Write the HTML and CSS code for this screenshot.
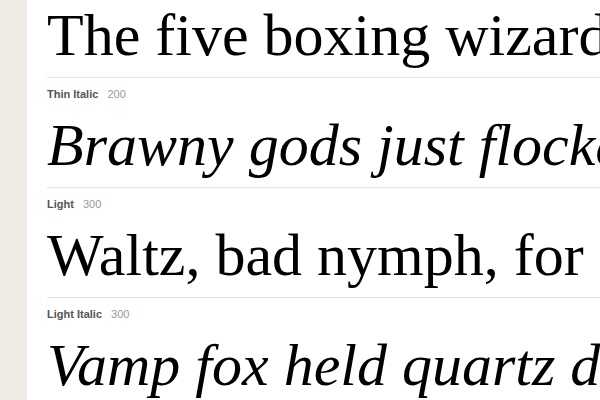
FILE: index.html
```
<!DOCTYPE HTML>
<html lang="en">
  <head>
    <title>Type specimen</title>
    <meta charset="utf-8">
    <link rel="stylesheet" href="styles.css">
  </head>
  <body>

  <div id="page">
    <div id="sidebar"></div>

    <div id="specimens">
      <div class="sample">The five boxing wizards jump quickly</div>

      <div class="style">
        <div class="label"><strong>Thin Italic</strong> <span class="weight">200</span></div>
        <div class="sample italic">Brawny gods just flocked up to quiz and vex him</div>
      </div>

      <div class="style">
        <div class="label"><strong>Light</strong> <span class="weight">300</span></div>
        <div class="sample">Waltz, bad nymph, for quick jigs vex</div>
      </div>

      <div class="style">
        <div class="label"><strong>Light Italic</strong> <span class="weight">300</span></div>
        <div class="sample italic">Vamp fox held quartz duck just by wing</div>
      </div>
    </div>
  </div>

  </body>
</html>
```

FILE: styles.css
```
html {
  height: 100%;
}
body {
  margin: 0;
  padding: 0;
  background: #ffffff;
  color: #000000;
  font-family: "Liberation Sans", Arial, sans-serif;
  height: 100%;
  overflow: hidden;
}

#page {
  display: flex;
  height: 100%;
}

#sidebar {
  flex: 0 0 27px;
  background-color: #eeebe5;
}

#specimens {
  flex: 1;
  min-width: 0;
  margin-top: -7px;
  padding-left: 20px;
  overflow: hidden;
}

.sample {
  font-family: "Liberation Serif", "Times New Roman", serif;
  font-size: 60px;
  line-height: 84px;
  white-space: nowrap;
}

.italic {
  font-style: italic;
}

.style {
  border-top: 1px solid #e3e3e3;
}

.label {
  font-size: 11px;
  line-height: 13px;
  padding: 10px 0 2px;
  color: #555;
}

.label strong {
  margin-right: 6px;
}

.weight {
  color: #999;
}
```
